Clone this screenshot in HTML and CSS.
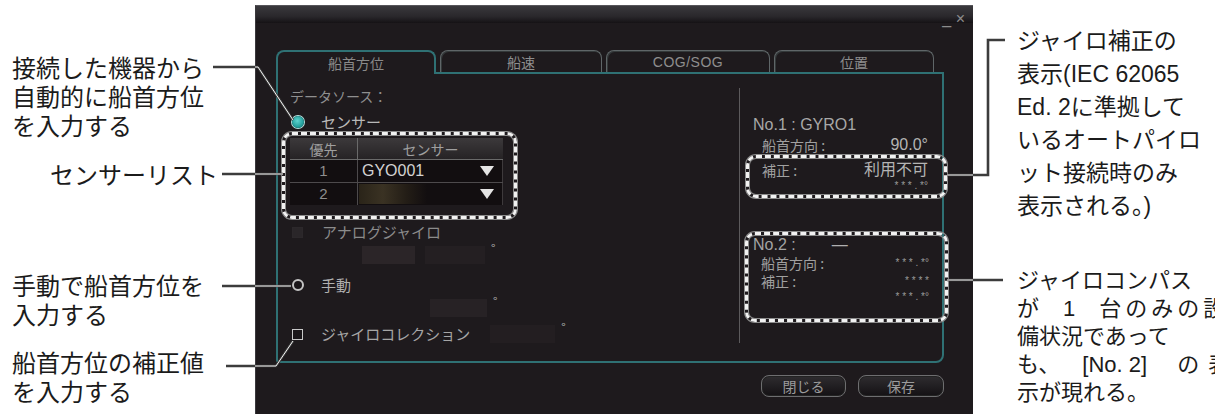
FILE: index.html
```html
<!DOCTYPE html>
<html lang="ja">
<head>
<meta charset="utf-8">
<title>船首方位設定</title>
<link rel="stylesheet" href="styles.css">
</head>
<body>
<div class="page">
  <div class="notes-left">
    <p class="note n1">接続した機器から<br>自動的に船首方位<br>を入力する</p>
    <p class="note n2">センサーリスト</p>
    <p class="note n3">手動で船首方位を<br>入力する</p>
    <p class="note n4">船首方位の補正値<br>を入力する</p>
  </div>

  <div class="dialog">
    <div class="titlebar"><span class="winctl">_ ×</span></div>
    <div class="tabs">
      <div class="tab t1 active">船首方位</div>
      <div class="tab t2">船速</div>
      <div class="tab t3">COG/SOG</div>
      <div class="tab t4">位置</div>
    </div>
    <div class="content">
      <div class="col-left">
        <div class="row ds">データソース：</div>
        <div class="row opt sensor-row"><span class="radio on"></span><span class="lbl">センサー</span></div>
        <div class="dashbox tablewrap">
          <div class="stable">
            <div class="th c1">優先</div><div class="th c2">センサー</div>
            <div class="td c1">1</div><div class="td c2"><span class="val">GYO001</span><span class="tri"></span></div>
            <div class="td c1 last">2</div><div class="td c2 last blank"><span class="val"></span><span class="tri"></span></div>
          </div>
        </div>
        <div class="row opt analog"><span class="chk dim"></span><span class="lbl dimtxt">アナログジャイロ</span></div>
        <div class="row inputs analog-in"><span class="box b1"></span><span class="box b2"></span><span class="deg">°</span></div>
        <div class="row opt manual"><span class="radio off"></span><span class="lbl">手動</span></div>
        <div class="row inputs manual-in"><span class="box b3"></span><span class="deg">°</span></div>
        <div class="row opt gyro"><span class="chk"></span><span class="lbl">ジャイロコレクション</span><span class="box b4"></span><span class="deg">°</span></div>
      </div>
      <div class="divider"></div>
      <div class="col-right">
        <div class="r-title">No.1 : GYRO1</div>
        <div class="r-row"><span>船首方向 :</span><span class="v">90.0°</span></div>
        <div class="dashbox d1">
          <div class="r-row in"><span>補正 :</span><span class="v">利用不可</span></div>
          <div class="r-row in small"><span></span><span class="v stars">* * * . *°</span></div>
        </div>
        <div class="dashbox d2">
          <div class="r-title in2">No.2 :<span class="dash">—</span></div>
          <div class="r-row in hd2"><span>船首方向 :</span><span class="v stars">* * * . *°</span></div>
          <div class="r-row in cr2"><span>補正 :</span><span class="v stars">* * * *</span></div>
          <div class="r-row in small s2"><span></span><span class="v stars">* * * . *°</span></div>
        </div>
      </div>
    </div>
    <div class="buttons">
      <button class="btn close">閉じる</button>
      <button class="btn save">保存</button>
    </div>
  </div>

  <div class="notes-right">
    <p class="rnote top">ジャイロ補正の<br>表示(IEC 62065<br>Ed. 2に準拠して<br>いるオートパイロ<br>ット接続時のみ<br>表示される。)</p>
    <p class="rnote bottom">ジャイロコンパス<br><span class="just">が<span class="sp"></span>1<span class="sp"></span><span class="wide">台のみの設</span></span><br>備状況であって<br><span class="just2">も、<span class="sp2"></span>[No. 2]<span class="sp3"></span><span class="no">の</span>表</span><br>示が現れる。</p>
  </div>

  <svg class="leaders" width="1215" height="414" viewBox="0 0 1215 414">
    <defs>
      <clipPath id="panel"><rect x="255" y="0" width="718" height="414"/></clipPath>
    </defs>
    <g class="dark">
      <polyline points="213,67 258,67 293,120"/>
      <polyline points="222,174 283,174"/>
      <polyline points="222,286 291,286"/>
      <polyline points="226,366 276,366 293,341"/>
      <polyline points="947,175 988,175 988,40 1005,40"/>
      <polyline points="947,280 1003,280"/>
    </g>
    <g class="light" clip-path="url(#panel)">
      <polyline points="213,67 258,67 293,120"/>
      <polyline points="222,174 283,174"/>
      <polyline points="222,286 291,286"/>
      <polyline points="226,366 276,366 293,341"/>
      <polyline points="947,175 988,175 988,40 1005,40"/>
      <polyline points="947,280 1003,280"/>
    </g>
  </svg>
</div>
</body>
</html>
```

FILE: styles.css
```css
* { box-sizing: border-box; }

html, body {
  margin: 0;
  padding: 0;
  background: #ffffff;
}

body {
  width: 1215px;
  height: 414px;
  overflow: hidden;
  font-family: "Liberation Sans", "Noto Sans CJK JP", sans-serif;
}

.page {
  position: relative;
  display: flex;
  width: 1215px;
  height: 414px;
  overflow: hidden;
}

/* ---------- left annotations ---------- */
.notes-left {
  width: 255px;
  flex: none;
}

.note {
  margin: 0;
  padding-left: 12px;
  font-size: 24px;
  line-height: 29px;
  color: #1b1b1b;
  white-space: nowrap;
}

.n1 { margin-top: 54px; }
.n2 { margin-top: 20px; padding-left: 50px; }
.n3 { margin-top: 82px; }
.n4 { margin-top: 19px; }

/* ---------- dialog ---------- */
.dialog {
  width: 718px;
  flex: none;
  margin-top: 5px;
  height: 420px;
  background: #1e1a1d;
  border-top: 1px solid #56555a;
  border-left: 1px solid #3a383c;
  font-family: "Noto Sans CJK JP", "Liberation Sans", sans-serif;
  color: #a8a8a8;
}

.titlebar {
  height: 17px;
  background: linear-gradient(#39383c, #2a282c 60%, #151215);
  display: flex;
  justify-content: flex-end;
  align-items: center;
  padding-right: 8px;
}

.winctl {
  font-family: "Liberation Sans", sans-serif;
  font-size: 16px;
  line-height: 16px;
  color: #8c8c8c;
  margin-top: 8px;
}

.tabs {
  display: flex;
  gap: 4px;
  margin-top: 27px;
  margin-left: 20px;
  height: 23px;
  position: relative;
  z-index: 2;
  margin-bottom: -1px;
}

.tab {
  height: 22px;
  border: 1px solid #5f6668;
  border-bottom: none;
  border-radius: 8px 8px 0 0;
  box-shadow: inset 1px 1px 0 #34393a;
  text-align: center;
  font-size: 14px;
  line-height: 22px;
  color: #8e8e8e;
}

.t1 { width: 160px; }
.t2 { width: 162px; }
.t3 { width: 164px; font-family: "Liberation Sans", sans-serif; letter-spacing: 0.5px; }
.t4 { width: 160px; }

.tab.active {
  height: 24px;
  border: 2px solid #2f7174;
  border-bottom: none;
  background: #1e1a1d;
  box-shadow: none;
  color: #8a8a8a;
}

.content {
  margin-left: 20px;
  width: 668px;
  height: 291px;
  border: 2px solid #2f7174;
  border-radius: 0 0 8px 3px;
  display: flex;
}

.col-left {
  width: 461px;
  flex: none;
  display: flex;
  flex-direction: column;
}

.row {
  display: flex;
  align-items: center;
  height: 18px;
  font-size: 15px;
  line-height: 18px;
  white-space: nowrap;
}

.ds { margin-top: 13px; padding-left: 12px; color: #8f8f8f; font-size: 14px; }

.opt .lbl { color: #b0b0b0; }

.sensor-row { margin-top: 8px; padding-left: 14px; }
.sensor-row .lbl { margin-left: 17px; color: #b8b8b8; }

.radio {
  width: 12px;
  height: 12px;
  border-radius: 50%;
  flex: none;
}

.radio.on {
  background: radial-gradient(circle at 45% 40%, #5fd3cf, #239f9c 60%, #187572);
  box-shadow: 0 0 0 1px #b8e2e0;
}

.radio.off {
  background: #1a1619;
  border: 2px solid #c4c4c4;
}

.chk {
  width: 11px;
  height: 11px;
  border: 1.5px solid #c8c8c8;
  background: #1a1619;
  flex: none;
}

.chk.dim {
  border-color: #2c282b;
  background: #2a2629;
}

.dimtxt { color: #8b8b8b !important; }

.dashbox {
  border: 3px dashed #f2f2f2;
  border-radius: 10px;
  box-shadow: 0 0 0 1px #8c8c8c, inset 0 0 0 1px #8c8c8c;
}

.tablewrap {
  margin-top: 1px;
  margin-left: 4px;
  width: 235px;
  height: 87px;
  padding: 3px 11px 11px 5px;
}

.stable {
  display: grid;
  grid-template-columns: 68px 145px;
  grid-template-rows: 22px 23px 22px;
  width: 213px;
  background: #120e10;
  border-right: 1px solid #3e3a3c;
  font-size: 14px;
}

.th {
  background: linear-gradient(#3c393b, #262325);
  color: #9f9f9f;
  text-align: center;
  line-height: 22px;
  border-bottom: 1px solid #6a6a6a;
}

.th.c1 { border-right: 1px solid #6a6a6a; }

.td {
  border-bottom: 1px solid #4d4a4c;
  line-height: 22px;
  color: #8e8e8e;
}

.td.last { border-bottom: none; }

.td.c1 {
  text-align: center;
  border-right: 1px solid #4d4a4c;
  font-family: "Liberation Sans", sans-serif;
  font-size: 15px;
}

.td.c2 {
  display: flex;
  align-items: center;
  justify-content: space-between;
  padding-left: 4px;
  padding-right: 9px;
}

.td .val {
  font-family: "Liberation Sans", sans-serif;
  font-size: 16px;
  color: #d2d2d2;
}

.td.blank .val {
  width: 68px;
  height: 20px;
  margin-left: -3px;
  background: linear-gradient(90deg, #2a2419, #3a3223 35%, #231d16 70%, #120e10);
}

.tri {
  width: 0;
  height: 0;
  border-left: 7px solid transparent;
  border-right: 7px solid transparent;
  border-top: 10px solid #e4e4e4;
}

.analog { margin-top: 4px; padding-left: 14px; }
.analog .lbl { margin-left: 19px; }

.inputs .box, .gyro .box {
  height: 18px;
  display: inline-block;
  flex: none;
}

.analog-in { margin-top: 5px; padding-left: 84px; }
.b1 { width: 53px; background: #2b2528; }
.b2 { width: 60px; margin-left: 10px; background: #241f22; }

.deg {
  align-self: flex-start;
  margin-left: 6px;
  margin-top: -4px;
  font-size: 12px;
  line-height: 12px;
  color: #b0b0b0;
}

.manual { margin-top: 12px; padding-left: 14px; }
.manual .lbl { margin-left: 17px; }

.manual-in { margin-top: 5px; padding-left: 152px; }
.b3 { width: 57px; background: #272225; }

.gyro { margin-top: 8px; padding-left: 14px; }
.gyro .lbl { margin-left: 18px; color: #a6a6a6; }
.b4 { width: 65px; margin-left: 20px; background: #231e21; }

.divider {
  width: 1px;
  flex: none;
  margin-top: 14px;
  height: 255px;
  background: #5c5a5c;
}

.col-right {
  flex: 1;
  display: flex;
  flex-direction: column;
  font-size: 14px;
  color: #a0a0a0;
}

.r-title {
  margin-top: 42px;
  padding-left: 13px;
  height: 18px;
  line-height: 18px;
  font-family: "Liberation Sans", "Noto Sans CJK JP", sans-serif;
  font-size: 16px;
  color: #a8a8a8;
  white-space: nowrap;
}

.r-row {
  display: flex;
  justify-content: space-between;
  align-items: center;
  height: 18px;
  line-height: 18px;
  margin-top: 2px;
  padding-left: 22px;
  padding-right: 14px;
  white-space: nowrap;
}

.r-row .v {
  font-family: "Liberation Sans", "Noto Sans CJK JP", sans-serif;
  font-size: 16px;
  color: #b4b4b4;
}

.r-row .v.stars {
  font-size: 10px;
  letter-spacing: 0px;
  color: #9a9a9a;
}

.d1 {
  margin-top: 1px;
  margin-left: 6px;
  margin-right: -5px;
  height: 43px;
  padding-top: 3px;
}

.d1 .r-row.in, .d2 .r-row.in {
  margin-top: 0;
  padding-left: 13px;
  padding-right: 16px;
}

.r-row.small { height: 14px; line-height: 14px; }

.d2 {
  margin-top: 34px;
  margin-left: 5px;
  margin-right: -6px;
  height: 90px;
  padding-top: 1px;
}

.r-title.in2 {
  margin-top: 0;
  padding-left: 5px;
  color: #a4a4a4;
}

.r-title .dash {
  margin-left: 36px;
  color: #b0b0b0;
}

.d2 .hd2 { margin-top: 4px; }
.d2 .cr2 { margin-top: 5px; }
.d2 .s2 { margin-top: 2px; }

.buttons {
  display: flex;
  justify-content: flex-end;
  gap: 12px;
  margin-top: 12px;
  padding-right: 29px;
}

.btn {
  height: 22px;
  border: 1.5px solid #6e6e70;
  border-radius: 8px;
  background: linear-gradient(#2f2d30, #141114);
  box-shadow: inset 0 0 0 1px #222;
  color: #9c9c9c;
  font-family: "Noto Sans CJK JP", sans-serif;
  font-size: 14px;
  line-height: 18px;
  padding: 0;
}

.close { width: 85px; }
.save { width: 86px; }

/* ---------- right annotations ---------- */
.notes-right {
  flex: 1;
  padding-left: 44px;
  white-space: nowrap;
}

.rnote {
  margin: 0;
  color: #1b1b1b;
  font-family: "Liberation Sans", "Noto Sans CJK JP", sans-serif;
}

.rnote.top {
  margin-top: 25px;
  font-size: 23px;
  line-height: 33px;
}

.rnote.bottom {
  margin-top: 44px;
  font-size: 22px;
  line-height: 28px;
}

.sp { display: inline-block; width: 24px; }
.just .wide { letter-spacing: 4px; }
.sp2 { display: inline-block; width: 22px; }
.sp3 { display: inline-block; width: 30px; }
.no { margin-right: 9px; }

/* ---------- leader lines ---------- */
.leaders {
  position: absolute;
  left: 0;
  top: 0;
  pointer-events: none;
  z-index: 5;
}

.leaders polyline {
  fill: none;
  stroke-linejoin: miter;
}

.leaders .dark polyline {
  stroke: #3c3c3c;
  stroke-width: 2.6;
}

.leaders .light polyline {
  stroke: #f4f4f4;
  stroke-width: 1;
}
```
